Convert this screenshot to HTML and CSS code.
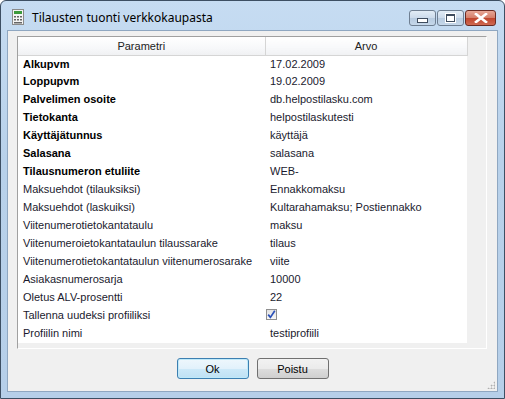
FILE: index.html
```html
<!DOCTYPE html>
<html lang="fi">
<head>
<meta charset="UTF-8" />
<title>Tilausten tuonti verkkokaupasta</title>
<link rel="stylesheet" href="styles.css">
</head>
<body>
<div class="window">
  <div class="titlebar">
    <svg class="app-icon" width="12" height="16" viewBox="0 0 12 16">
      <rect x="0.5" y="0.5" width="11" height="15" fill="#f4f4f4" stroke="#8a8a8a"/>
      <rect x="2" y="2" width="8" height="3" fill="#3c9a3c"/>
      <rect x="2" y="7" width="2" height="1.5" fill="#666"/>
      <rect x="5" y="7" width="2" height="1.5" fill="#666"/>
      <rect x="8" y="7" width="2" height="1.5" fill="#666"/>
      <rect x="2" y="10" width="2" height="1.5" fill="#666"/>
      <rect x="5" y="10" width="2" height="1.5" fill="#666"/>
      <rect x="8" y="10" width="2" height="1.5" fill="#666"/>
      <rect x="2" y="13" width="8" height="1.5" fill="#666"/>
    </svg>
    <span class="title">Tilausten tuonti verkkokaupasta</span>
    <div class="caption-buttons">
      <div class="cbtn"><span class="min-glyph"></span></div>
      <div class="cbtn"><span class="max-glyph"></span></div>
      <div class="cbtn close">
        <svg width="14" height="10" viewBox="0 0 14 10">
          <path d="M2 1 L12 9 M12 1 L2 9" stroke="#fff" stroke-width="2.6" stroke-linecap="square"/>
        </svg>
      </div>
    </div>
  </div>
  <div class="client">
    <div class="grid">
      <table>
        <tr class="head"><th class="c1">Parametri</th><th class="c2">Arvo</th></tr>
        <tr><td class="c1 bold">Alkupvm</td><td class="c2">17.02.2009</td></tr>
        <tr><td class="c1 bold">Loppupvm</td><td class="c2">19.02.2009</td></tr>
        <tr><td class="c1 bold">Palvelimen osoite</td><td class="c2">db.helpostilasku.com</td></tr>
        <tr><td class="c1 bold">Tietokanta</td><td class="c2">helpostilaskutesti</td></tr>
        <tr><td class="c1 bold">Käyttäjätunnus</td><td class="c2">käyttäjä</td></tr>
        <tr><td class="c1 bold">Salasana</td><td class="c2">salasana</td></tr>
        <tr><td class="c1 bold">Tilausnumeron etuliite</td><td class="c2">WEB-</td></tr>
        <tr><td class="c1">Maksuehdot (tilauksiksi)</td><td class="c2">Ennakkomaksu</td></tr>
        <tr><td class="c1">Maksuehdot (laskuiksi)</td><td class="c2">Kultarahamaksu; Postiennakko</td></tr>
        <tr><td class="c1">Viitenumerotietokantataulu</td><td class="c2">maksu</td></tr>
        <tr><td class="c1">Viitenumeroietokantataulun tilaussarake</td><td class="c2">tilaus</td></tr>
        <tr><td class="c1">Viitenumerotietokantataulun viitenumerosarake</td><td class="c2">viite</td></tr>
        <tr><td class="c1">Asiakasnumerosarja</td><td class="c2">10000</td></tr>
        <tr><td class="c1">Oletus ALV-prosentti</td><td class="c2">22</td></tr>
        <tr><td class="c1">Tallenna uudeksi profiiliksi</td><td class="c2 check-cell"><span class="checkbox"><svg width="11" height="11" viewBox="0 0 11 11"><path d="M2.2 5.6 L4.4 8.4 L8.8 1.8" fill="none" stroke="#2a50b8" stroke-width="1.7"/></svg></span></td></tr>
        <tr><td class="c1">Profiilin nimi</td><td class="c2">testiprofiili</td></tr>
      </table>
    </div>
    <div class="buttons">
      <button class="default">Ok</button>
      <button>Poistu</button>
    </div>
    <div class="grip"></div>
  </div>
</div>
</body>
</html>
```

FILE: styles.css
```css
body { margin: 0; background: #fff; font-family: "Liberation Sans", Arial, sans-serif; }
.window { width: 505px; height: 399px; box-sizing: border-box; border: 1px solid #3d4f63; border-radius: 6px 6px 0 0; background: linear-gradient(to bottom, #c6dcf2 0%, #b8d1ea 40%, #b6cfe9 100%); padding: 0 6px 6px 6px; display: flex; flex-direction: column; }
.titlebar { height: 29px; display: flex; align-items: center; }
.app-icon { margin: 2px 0 0 5px; }
.title { margin-left: 8px; margin-top: 3px; font-family: "Noto Sans", sans-serif; font-size: 12px; color: #000; }
.caption-buttons { margin-left: auto; margin-right: 2px; align-self: flex-start; margin-top: 9px; display: flex; gap: 1px; }
.cbtn { width: 27px; height: 16px; border: 1px solid #6f7f92; border-radius: 3px; background: linear-gradient(to bottom, #e2ecf6 0%, #ccdbeb 50%, #b7cbe0 51%, #c6d8ea 100%); display: flex; align-items: center; justify-content: center; box-sizing: border-box; }
.cbtn.close { width: 31px; border-color: #6b2b22; background: linear-gradient(to bottom, #e7a796 0%, #d57d68 50%, #c0452c 51%, #cf6a52 100%); }
.min-glyph { width: 9px; height: 3px; background: #fff; border: 1px solid #3e4c5e; margin-top: 4px; }
.max-glyph { width: 7px; height: 5px; border: 1px solid #3e4c5e; border-top-width: 2px; background: #fff; box-shadow: 0 0 0 1px #fff; }
.client { flex: 1; background: #f0f0f0; border: 1px solid #8fa7c1; position: relative; display: flex; flex-direction: column; }
.grid { margin: 5px 0 0 9px; width: 470px; height: 313px; box-sizing: border-box; border-top: 1px solid #a0a0a0; border-left: 1px solid #a0a0a0; border-right: 1px solid #fff; border-bottom: 1px solid #fff; background: #f0f0f0; }
table { border-collapse: collapse; font-size: 11px; table-layout: fixed; }
td, th { box-sizing: border-box; height: 18px; padding: 0; white-space: nowrap; overflow: hidden; }
td { vertical-align: top; line-height: 14px; padding-top: 1px; }
.c1 { width: 247px; }
.c2 { width: 202px; }
td { background: #fff; color: #1a1a2e; }
td.c1 { padding-left: 5px; }
td.c2 { padding-left: 5px; }
td.bold { font-weight: bold; color: #000; }
.head th { font-weight: normal; color: #222; background: linear-gradient(to bottom, #ffffff 0%, #f7f8fa 60%, #f0f1f3 100%); border-right: 1px solid #d5d5d5; border-bottom: 1px solid #d5d5d5; text-align: center; }
td.check-cell { padding-left: 1px; padding-top: 2px; }
.checkbox { display: inline-block; width: 11px; height: 11px; box-sizing: border-box; border: 1px solid #8f8f8f; background: linear-gradient(to bottom, #e2e2e2, #f8f8f8); vertical-align: top; }
.checkbox svg { display: block; margin: -1px 0 0 -1px; }
.buttons { display: flex; justify-content: center; gap: 8px; margin-top: 9px; }
button { width: 72px; height: 21px; font-family: "Liberation Sans", Arial, sans-serif; font-size: 11px; color: #000; border: 1px solid #707070; border-radius: 3px; background: linear-gradient(to bottom, #f2f2f2 0%, #ebebeb 50%, #dddddd 51%, #cfcfcf 100%); padding: 0; }
button.default { border-color: #3c7fb1; box-shadow: inset 0 0 0 1px #bfe9f9; background: linear-gradient(to bottom, #eef7fc 0%, #e2f1fb 50%, #cde9f8 51%, #bfe1f4 100%); }
.grip { position: absolute; right: 2px; bottom: 2px; width: 8px; height: 8px; background: radial-gradient(circle, #b0b0b0 0.8px, transparent 1.2px) 0 0 / 3px 3px; clip-path: polygon(100% 0, 100% 100%, 0 100%); }
```
